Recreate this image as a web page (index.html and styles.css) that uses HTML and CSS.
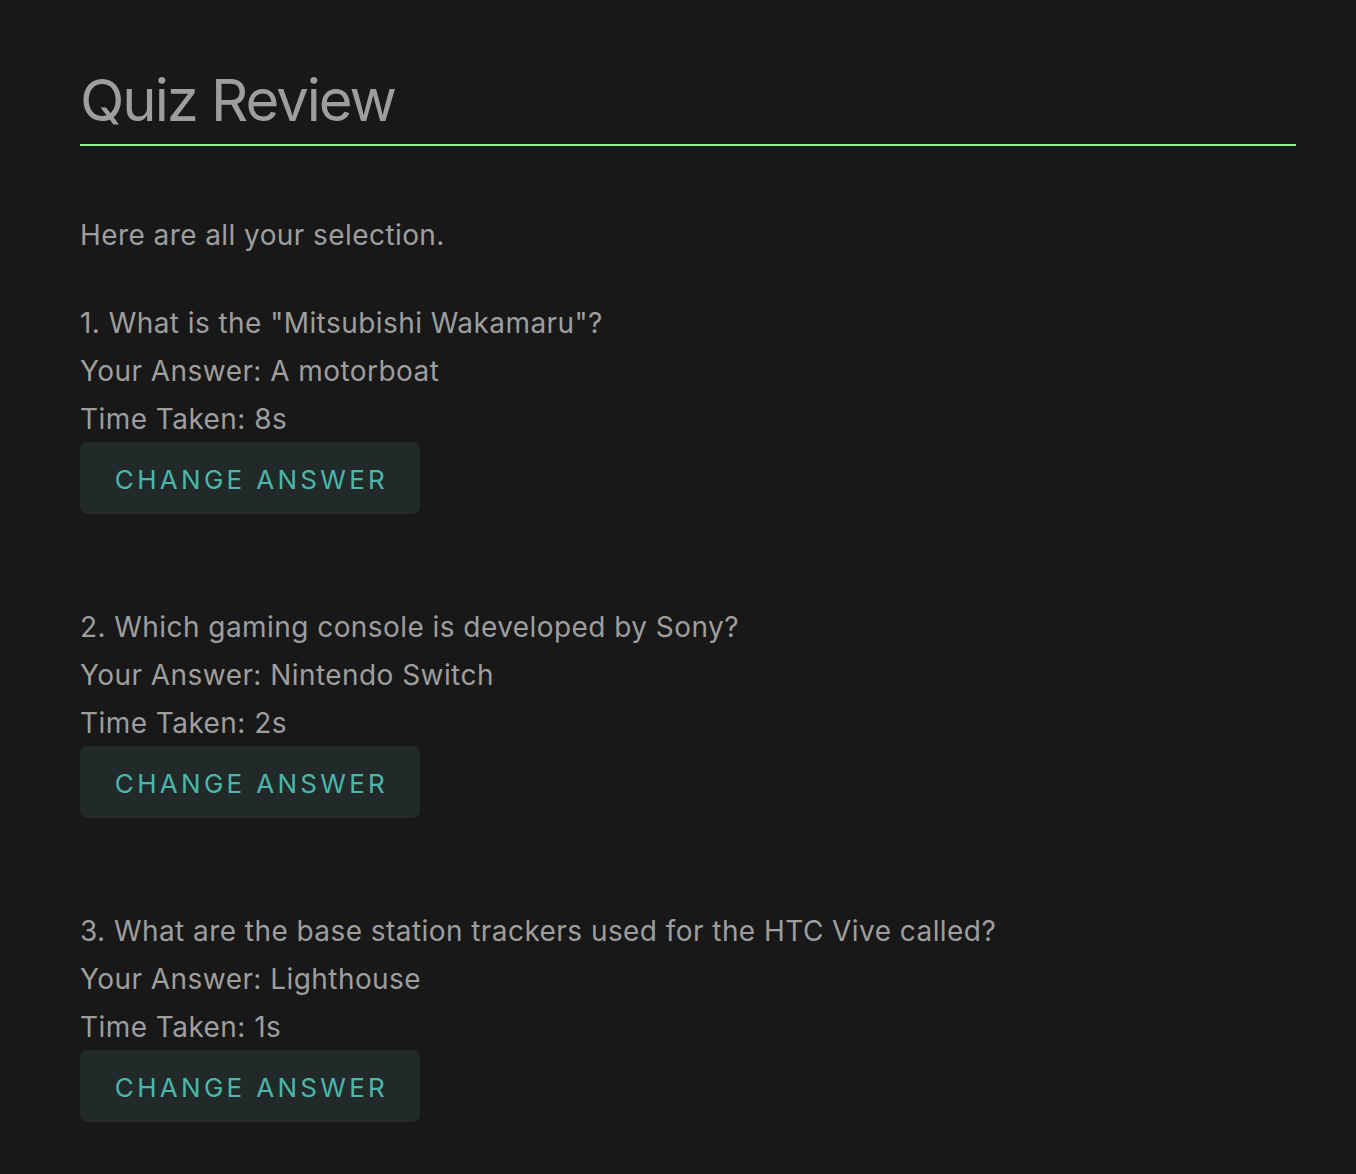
FILE: index.html
```html
<!DOCTYPE html>
<html lang="en">
<head>
<meta charset="utf-8">
<title>Quiz Review</title>
<link rel="stylesheet" href="styles.css">
</head>
<body>
<main class="page">
  <h1 class="title">Quiz Review</h1>
  <p class="intro">Here are all your selection.</p>
  <section class="item">
    <p class="line">1. What is the "Mitsubishi Wakamaru"?</p>
    <p class="line">Your Answer: A motorboat</p>
    <p class="line">Time Taken: 8s</p>
    <button class="btn">Change Answer</button>
  </section>
  <section class="item">
    <p class="line">2. Which gaming console is developed by Sony?</p>
    <p class="line">Your Answer: Nintendo Switch</p>
    <p class="line">Time Taken: 2s</p>
    <button class="btn">Change Answer</button>
  </section>
  <section class="item">
    <p class="line">3. What are the base station trackers used for the HTC Vive called?</p>
    <p class="line">Your Answer: Lighthouse</p>
    <p class="line">Time Taken: 1s</p>
    <button class="btn">Change Answer</button>
  </section>
</main>
</body>
</html>
```

FILE: styles.css
```css
html, body {
  margin: 0;
  padding: 0;
  background: #181818;
}
body {
  font-family: Inter, "Noto Sans", "Liberation Sans", sans-serif;
  color: #9e9e9e;
}
.page {
  padding: 60px 60px 40px 80px;
  display: flex;
  flex-direction: column;
}
.title {
  margin: 0;
  font-size: 58px;
  font-weight: 400;
  letter-spacing: -2px;
  line-height: 80px;
  padding-bottom: 4px;
  border-bottom: 2px solid #90ee90;
}
.intro {
  margin: 65px 0 40px;
  font-size: 28px;
  line-height: 48px;
  letter-spacing: 0.42px;
}
.item {
  display: flex;
  flex-direction: column;
  align-items: flex-start;
  margin-bottom: 89px;
}
.item:last-child {
  margin-bottom: 0;
}
.line {
  margin: 0;
  font-size: 28px;
  line-height: 48px;
  letter-spacing: 0.44px;
}
.btn {
  margin-top: -1px;
  width: 340px;
  height: 72px;
  border: none;
  border-radius: 7px;
  background: #212a29;
  color: #4db6ac;
  font-family: inherit;
  font-size: 26px;
  letter-spacing: 3.3px;
  text-transform: uppercase;
  padding: 2px 0 0 3px;
}
```
